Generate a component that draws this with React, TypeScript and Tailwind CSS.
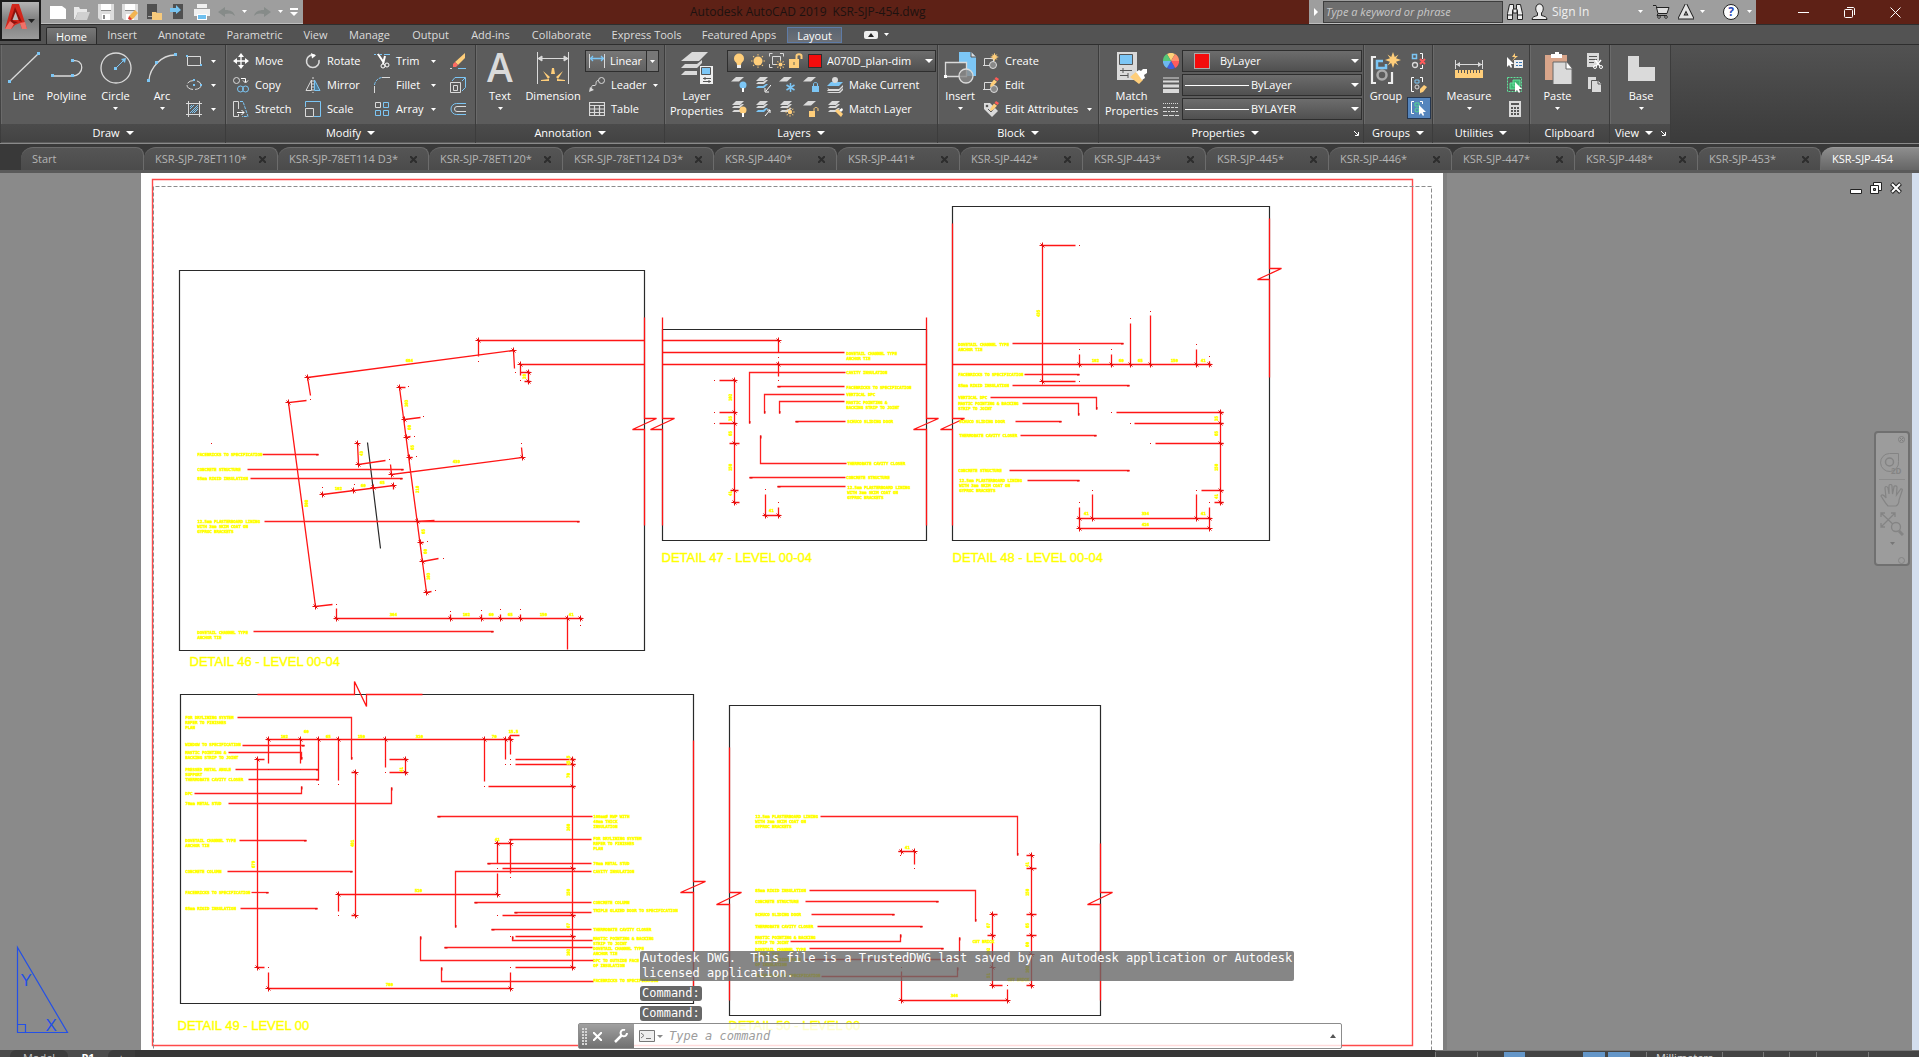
import React from 'react';

const L = '#dadada';
const B = '#7cc6f5';
const O = '#ffce7a';

/* ---------- icon helpers ---------- */

const S: React.FC<{ children: React.ReactNode }> = ({ children }) => (
  <svg className="size-4 shrink-0" viewBox="0 0 16 16" fill="none" stroke={L} strokeWidth="1">
    {children}
  </svg>
);

const XL: React.FC<{ children: React.ReactNode }> = ({ children }) => (
  <svg className="size-8 shrink-0" viewBox="0 0 32 32" fill="none" stroke={L} strokeWidth="1">
    {children}
  </svg>
);

const Down: React.FC<{ size?: 's' | 'm' }> = ({ size = 's' }) =>
  size === 's' ? (
    <svg className="h-[3px] w-[5px] shrink-0" viewBox="0 0 5 3" fill="#fff"><path d="M0 0h5L2.5 3z" /></svg>
  ) : (
    <svg className="h-1 w-2 shrink-0" viewBox="0 0 8 4" fill="#fff"><path d="M0 0h8L4 4z" /></svg>
  );

const Sheets = ({ blue = false }: { blue?: boolean }) => (
  <g stroke="none" fill={L}>
    <path d="M5 0h8l-4 4H1z" />
    <path d="M3 5l-2 2h8l4-4-2 0-3 2z" />
    <path d="M3 9l-2 2h8l4-4-2 0-3 2z" fill={blue ? B : L} />
  </g>
);

const Sheet = () => <path d="M5 0h8L8 4.500H0z" stroke="none" fill={L} />;

const Sun = ({ x, y, r = 2.5 }: { x: number; y: number; r?: number }) => (
  <g transform={`translate(${x} ${y})`} stroke={O}>
    <circle r={r} fill={O} stroke="none" />
    {[0, 45, 90, 135, 180, 225, 270, 315].map((a) => (
      <path key={a} d={`M0 ${-r - 1}V${-r - 2.4}`} transform={`rotate(${a})`} />
    ))}
  </g>
);

const Star = ({ x, y, s = 1 }: { x: number; y: number; s?: number }) => (
  <path
    transform={`translate(${x} ${y}) scale(${s})`}
    d="M0-8L1.800-3 5.500-5.500 3-1.800 8 0 3 1.800 5.500 5.500 1.800 3 0 8-1.800 3-5.500 5.500-3 1.800-8 0-3-1.800-5.500-5.500-1.800-3z"
    fill={O}
    stroke="none"
  />
);

const Pencil = () => (
  <g stroke="none">
    <path d="M13 0l3 2-1.500 2-3-2z" fill="#ff5b57" />
    <path d="M11 2.500l3 2.300L10 9 7 10l.6-3z" fill={O} />
  </g>
);

/* ---------- ribbon icons ---------- */

const IconLine = <XL><path d="M2 29L30 2" strokeWidth="1.300" /><path d="M0 28h3v3H0zM29 0h3v3h-3z" fill={B} stroke="none" /></XL>;
const IconPolyline = <XL><path d="M2 24h19M21 9c13-3 13 15 0 15" strokeWidth="1.300" /><path d="M0 22h3v3H0zM20 22h3v3h-3zM20 7h3v3h-3z" fill={B} stroke="none" /></XL>;
const IconCircle = <XL><circle cx="16" cy="16" r="15" strokeWidth="1.300" /><path d="M17 15l7-7" stroke={B} /><path d="M14 15h3v3h-3zM26 6l-1 5-4-4z" fill={B} stroke="none" /></XL>;
const IconArc = <XL><path d="M3 28C4 16 15 3 29 3" strokeWidth="1.300" /><path d="M1 27h3v3H1zM9 9h3v3H9zM28 1h3v3h-3z" fill={B} stroke="none" /></XL>;
const IconRect = <S><path d="M1.500 3.500h13v9h-13z" /><path d="M0 2h2v2H0zM14 11h2v2h-2z" fill={B} stroke="none" /></S>;
const IconEllipse = <S><ellipse cx="8" cy="8" rx="7" ry="4.500" strokeDasharray="8 2" /><path d="M7 7h2v2H7zM7 2h2v2H7zM14 7h2v2h-2z" fill={B} stroke="none" /></S>;
const IconHatch = <S><path d="M0 2.500h16M0 13.500h16M2.500 0v16M13.500 0v16" /><path d="M4 8l4-4M4 12l8-8M8 12l4-4M4 6l2-2M6 12l6-6" stroke={B} /></S>;
const IconMove = <S><path d="M8 2v12M2 8h12" strokeWidth="1.300" stroke="#fff" /><path d="M8 0l3 4H5zM8 16l3-4H5zM0 8l4-3v6zM16 8l-4-3v6z" fill="#fff" stroke="none" /></S>;
const IconCopy = <S><circle cx="3.500" cy="3.500" r="3" /><path d="M8 1.500h4.500V5M10 3.500L12.500 6 15 3.500" stroke="#fff" /><circle cx="7.500" cy="12" r="3" stroke={B} /><circle cx="12.500" cy="12" r="3" stroke={B} /></S>;
const IconStretch = <S><path d="M5.500 6V.5h-5v15h5V13M5.500 8v-2" /><path d="M4 11.500h7M8.500 9l2.500 2.500L8.500 14" stroke="#fff" /><path d="M7 .5h3l5 15H9" stroke={B} strokeDasharray="3 1" /></S>;
const IconRotate = <S><path d="M10 2.300A6.300 6.300 0 1 0 14 7" strokeWidth="1.600" /><path d="M6 0l5 2.500-4 3z" fill="#fff" stroke="none" /></S>;
const IconMirror = <S><path d="M6.500 3v10.500H1z" /><path d="M9.500 3v10.500H15z" stroke={B} fill="#4c7b97" /><path d="M8 0v16" strokeDasharray="2 1" /></S>;
const IconScale = <S><path d="M.5 6V.5h15v15H9" stroke={B} /><path d="M.5 7.500h8v8h-8z" /></S>;
const IconTrim = <S><path d="M0 1.500h9" stroke={B} strokeDasharray="2 1" /><path d="M10 1.500h6" stroke={B} /><path d="M4 1l6 9M11 3l-2 8" stroke="#fff" strokeWidth="2" /><circle cx="9" cy="13" r="2" stroke="#fff" /><circle cx="13" cy="12" r="2" stroke="#fff" /></S>;
const IconFillet = <S><path d="M.5 16V9M8 .500h8" /><path d="M.5 8C1 4 4 1 8 .5" stroke={B} strokeDasharray="3 1" /></S>;
const IconArray = <S><path d="M1.500 1.500h5v5h-5z" /><path d="M9.500 1.500h5v5h-5zM1.500 9.500h5v5h-5zM9.500 9.500h5v5h-5z" stroke={B} /></S>;
const IconErase = <S><path d="M15 0v5l-7 7-3-3z" fill={O} stroke="none" /><path d="M5 9l3 3-2 2H3v-3z" fill="#ff6b62" stroke="none" /><path d="M0 15.500h2" /><path d="M8 15.500h8" stroke={B} /></S>;
const IconExplode = <S><path d="M.5 5.500h10v10H.5z" /><path d="M3.500 8.500h4v5h-4z" /><path d="M2 4l3-3.500h10.500v10L12 14M12 4l3-3" stroke={B} /></S>;
const IconOffset = <S><path d="M16 2.500H6.500a5.500 5.500 0 0 0 0 11H16" stroke={B} /><path d="M16 5.500H7a2.500 2.500 0 0 0 0 5h9" /></S>;
const IconText = <svg className="size-8 overflow-visible" viewBox="0 0 32 32"><text x="3" y="30" fontFamily="Open Sans, sans-serif" fontSize="39" fontWeight="600" fill={L}>A</text></svg>;
const IconDimension = (
  <XL>
    <path d="M.5 0v32M31.500 0v32M1 6.500h30" /><path d="M1 6.500l4-2.500v5zM31 6.500L27 4v5z" fill={L} />
    <g fill={O} stroke="none">
      <path d="M15 16h2l1 6h-4zM6 19l7 6-2 2zM26 19l-7 6 2 2zM4 28l8-1v2H4zM28 28l-8-1v2h8z" />
    </g>
  </XL>
);
const IconLinear = <S><path d="M.5 1v14M15.500 1v14" /><path d="M1 5.500h14M4 3L1.500 5.500 4 8M12 3l2.500 2.500L12 8" stroke={B} strokeWidth="1.300" /></S>;
const IconLeader = <S><circle cx="12.500" cy="3.500" r="3" /><path d="M9.500 3.500C5 3.500 9 9 5 8.500S4 11 1.500 13" /><path d="M0 15l1-5 4 3z" fill={L} stroke="none" /></S>;
const IconTable = <S><path d="M.5 1.500h15v13H.5zM.5 4.500h15M.5 8h15M.5 11.500h15M5.500 5v10M10.500 5v10" strokeWidth="1.200" /></S>;
const IconLayerProps = (
  <XL>
    <path d="M11 0h16l-9 9H0z" fill={L} stroke="none" /><path d="M4 12l-4 4h16l5-5v-3l-5 4zM4 19l-4 4h16v-4z" fill={L} stroke="none" />
    <path d="M19 14h13v18H19z" fill="#eee" stroke="none" /><path d="M20.500 15.500h9v7h-9z" fill={B} stroke="#555" /><path d="M22 26.500h8M22 29.500h8M24 25v3M28 28v3" stroke="#555" />
  </XL>
);
const IconBulb = <S><circle cx="8" cy="5.500" r="5" fill={O} stroke="none" /><path d="M5 8h6l-1 4H6z" fill={O} stroke="none" /><path d="M6 12h4v3H6z" fill="#eee" stroke="none" /></S>;
const IconSun = <S><Sun x={8} y={8} r={4.500} /></S>;
const IconVpFreeze = <S><path d="M.5 3.500v-3h3M11 .500h3.500v3M.5 11v3.500h3" /><path d="M8 11.500H3.500v-8h8V7" /><Sun x={11.5} y={11.5} r={2} /></S>;
const IconUnlocked = <S><path d="M1 6h10v9H1z" fill={O} stroke="none" /><path d="M8.500 6V3c0-2.500 5-2.500 5 0v3" stroke={O} strokeWidth="2" /><path d="M6 9v3" stroke="#665" /></S>;
const IconLayOff = <S><Sheet /><circle cx="12" cy="8" r="3.500" fill={B} stroke="none" /><path d="M12 11v4" stroke="#fff" strokeWidth="2" /></S>;
const IconLayIso = <S><Sheets blue /><path d="M16 8l-5 6M10 15v-4M10 15h4" stroke="#fff" /></S>;
const IconLayFrz = <S><Sheet /><path d="M11.500 6v9M7.500 8l8 5M15.500 8l-8 5" stroke={B} strokeWidth="1.500" /></S>;
const IconLayLock = <S><Sheet /><path d="M9 9h7v6H9z" fill={B} stroke="none" /><path d="M10.500 9V7c0-2 4-2 4 0v2" stroke={B} /></S>;
const IconMakeCur = <S><path d="M4 5h12l-4 4H0z" fill={B} stroke="none" /><path d="M2 11l-2 1h12l4-4v2l-4 4H0zM2 15h10l4-4v2l-3 3H0z" fill={L} stroke="none" /><circle cx="8" cy="3" r="3" fill={L} stroke="none" /></S>;
const IconLayOn = <S><Sheets /><circle cx="12" cy="9" r="3.500" fill={O} stroke="none" /><path d="M12 12v4" stroke="#fff" strokeWidth="2" /></S>;
const IconLayUniso = <S><Sheets blue /><path d="M10 15l5-6M15 12V9h-3" stroke="#fff" /></S>;
const IconLayThaw = <S><Sheets /><Sun x={11} y={11} r={2.200} /></S>;
const IconLayUnlock = <S><Sheet /><path d="M6 10h6v6H6z" fill={O} stroke="none" /><path d="M11 10V8c0-2 4-2 4 0v2" stroke={O} /></S>;
const IconLayMatch = <S><Sheets /><path d="M8 10l3-2 5 5-2 3z" fill={O} stroke="none" /><path d="M12 9l3-2 1 2-2 2z" fill="#fff" stroke="none" /></S>;
const IconInsert = (
  <XL>
    <path d="M15 0h12l5 5v19H15z" fill={B} stroke="none" /><path d="M27 0v5h5" fill="#ddd" stroke="#555" />
    <path d="M1.500 10.500h21v14h-21z" fill="#666" stroke={L} strokeWidth="1.300" /><circle cx="22" cy="24" r="7" fill="#888c" strokeWidth="1.300" /><path d="M0 23h3v3H0z" fill="#fff" stroke="none" />
  </XL>
);
const IconCreate = <S><path d="M1.500 5.500h9v7h-9zM0 12.500h2" /><circle cx="10" cy="12" r="3.500" fill="#888" /><Star x={11.500} y={4} s={0.550} /></S>;
const IconEdit = <S><path d="M1.500 5.500h9v7h-9zM0 12.500h2" /><circle cx="11" cy="12" r="3.500" fill="#888" /><Pencil /></S>;
const IconEditAttr = <S><path d="M1 2h6l8 8-6 6-8-8z" fill={L} stroke="none" /><circle cx="4" cy="5" r="1.300" fill="#555" stroke="none" /><path d="M5 8l3 3 4-5" stroke="#555" /><Pencil /></S>;
const IconMatchProps = (
  <XL>
    <path d="M1 0h20v28H1z" fill={L} stroke="none" /><path d="M3.500 2.500h13v10h-13z" fill={B} stroke="#555" /><path d="M4 18.500h12M4 23.500h8M7 16v5M12 21v5" stroke="#555" />
    <path d="M14 25l6-5 7 8-4 4z" fill={O} stroke="none" /><path d="M20 20l3-2 2 1 2-2h4v4l-3 2 1 3-3 2z" fill="#fff" stroke="none" />
  </XL>
);
const IconWheel = (
  <S>
    <g stroke="none">
      {['#ffd27a', '#ff8f6b', '#ff5c5c', '#3c5fe0', '#6db8f0', '#55c878'].map((c, i) => (
        <path key={c} d="M8 8L4 1A8 8 0 0 1 12 1z" fill={c} transform={`rotate(${i * 60} 8 8)`} />
      ))}
    </g>
  </S>
);
const IconWeight = <S><path d="M0 1h16" /><path d="M0 4.500h16" strokeWidth="2" /><path d="M0 9h16" strokeWidth="3" /><path d="M0 14h16" strokeWidth="4" /></S>;
const IconLtype = <S><path d="M0 2.500h16" strokeDasharray="1 1" /><path d="M0 6.500h16" strokeDasharray="3 1" /><path d="M0 10.500h16" strokeDasharray="4 1 2 1" /><path d="M0 14.500h16" strokeDasharray="5 1" /></S>;
const IconGroup = (
  <XL>
    <path d="M6 5H2v26h4M18 31h4V20" strokeWidth="2.200" stroke="#eee" /><path d="M13 9H7v7h9v-4" stroke={B} strokeWidth="2.500" /><circle cx="12" cy="23" r="4.500" stroke="#aaa" strokeWidth="2.500" />
    <Star x={23} y={8} />
  </XL>
);
const IconUngroup = <S><path d="M1.500 1.500h4v4h-4z" stroke={B} strokeWidth="1.500" /><circle cx="4" cy="12" r="2.500" strokeWidth="1.300" /><path d="M9 .500h2.500V6M11.500 12v3.500H9" stroke="#fff" /><path d="M9 6l5 5M14 6l-5 5" stroke="#ff5c5c" strokeWidth="2" /></S>;
const IconGroupEdit = <S><path d="M3 .500H.5v14H3M9 .500h2.500V5" stroke="#fff" /><path d="M4 3h4v3H4z" stroke={B} /><circle cx="6" cy="10" r="2" /><path d="M9 12l4-4 3 2-4 5-3 1z" fill={O} stroke="none" /></S>;
const IconGroupSel = <S><path d="M3 1.500H.5v12H3M9 1.500h2.500V4" stroke="#fff" /><path d="M4 3h4v3H4z" stroke="#55d890" /><circle cx="6" cy="10" r="2" stroke="#55d890" /><path d="M8 5v10l2-2 2 3 1-1-1-3h3z" fill="#fff" stroke="none" /></S>;
const IconMeasure = <XL><path d="M2.500 8v9M29.500 8v9M3 12.500h26" /><path d="M3 12.500l4-2.500v5zM29 12.500L25 10v5z" fill={L} stroke="none" /><path d="M2 18h28v8H2z" fill={O} stroke="none" /><path d="M5.500 18v3M8.500 18v3M11.500 18v3M14.500 18v4M17.500 18v3M20.500 18v3M23.500 18v3M26.500 18v3" stroke="#555" /></XL>;
const IconQSelect = <S><path d="M0 4v10l2-2 2 3 1-1-1-3h3z" fill="#fff" stroke="none" /><path d="M8 0L5 4h3L5 8l6-5H8z" fill={O} stroke="none" /><path d="M7 7h9v8H7z" fill="#eee" stroke="none" /><path d="M9 9.500h2M12 9.500h3M9 12.500h2M12 12.500h3" stroke="#3979b8" /></S>;
const IconSelAll = <S><path d="M.5.500h14v14H.5z" stroke="#5fe39a" strokeDasharray="2 1" /><path d="M3 6h6v6H3zM6 3h7v6H6z" fill="#3fb574" stroke="#5fe39a" /><path d="M8 5v10l2-2 2 3 1-1-1-3h3z" fill="#fff" stroke="none" /></S>;
const IconCalc = <S><path d="M2 0h12v16H2z" fill={L} stroke="none" /><path d="M4 3h8" stroke="#555" strokeWidth="2" /><path d="M4 7h8M4 10h8M4 13h8" stroke="#555" strokeWidth="2" strokeDasharray="2 1" /></S>;
const IconPaste = <XL><path d="M3 3h22v25H3z" fill="#d9a58a" stroke="none" /><path d="M9 2h4V0h4v2h3v4H9z" fill="#fff" stroke="none" /><path d="M11 10h14l5 6v17H11z" fill={L} stroke="#666" /><path d="M24 10v7h6" fill="#fff" stroke="#666" /></XL>;
const IconCut = <S><path d="M0 0h12v8l-4 6H0z" fill={L} stroke="none" /><path d="M2 3.500h8M2 6.500h8M2 9.500h5" stroke="#555" /><path d="M8 7l5 6M14 7l-5 6" stroke="#fff" strokeWidth="1.500" /><circle cx="8" cy="14" r="1.500" stroke="#fff" /><circle cx="14" cy="14" r="1.500" stroke="#fff" /></S>;
const IconCopyClip = <S><path d="M1 0h8v12H1z" fill={L} stroke="none" /><path d="M4.500 3.500h7l3 3v9h-10z" fill={L} stroke="#5a5a5a" /><path d="M11 4v3h3" stroke="#5a5a5a" /></S>;
const IconBase = <XL><path d="M3 4h11v11h16v14H3z" fill={L} stroke="none" /></XL>;

/* ---------- ribbon parts ---------- */

const Big: React.FC<{ icon: React.ReactNode; label: string; width: string; arrow?: boolean }> = ({ icon, label, width, arrow }) => (
  <button className={`flex shrink-0 flex-col items-center pt-[3px] ${width}`}>
    {icon}
    <span className="mt-1 text-[11px] leading-[15px] whitespace-pre-line">{label}</span>
    {arrow && <span className="mt-1"><Down /></span>}
  </button>
);

const Row: React.FC<{ icon: React.ReactNode; label?: string; arrow?: boolean }> = ({ icon, label, arrow }) => (
  <button className="flex h-6 w-full items-center gap-[6px]">
    {icon}
    {label && <span className="flex-1 text-left text-[11px] whitespace-nowrap">{label}</span>}
    {arrow && <span className="ml-auto"><Down /></span>}
  </button>
);

const Panel: React.FC<{ title: string; width: string; arrow?: boolean; launcher?: boolean; children: React.ReactNode }> = ({
  title, width, arrow = true, launcher, children,
}) => (
  <section className={`flex shrink-0 flex-col border-r border-[#3c3c3c] bg-[#5c5c5c] ${width}`}>
    <div className="flex h-[79px] items-start border-l border-[#6a6a6a] pt-1">{children}</div>
    <div className={`relative flex h-[18px] items-center justify-center gap-[6px] bg-linear-to-b from-[#4b4b4b] to-[#434343] text-[11px] ${launcher ? 'pr-3' : ''}`}>
      <span>{title}</span>
      {arrow && <Down size="m" />}
      {launcher && (
        <svg className="absolute right-1 bottom-[6px] size-[5px]" viewBox="0 0 5 5" stroke="#fff" fill="none"><path d="M0 0l4 4M4.500 1v3.500H1" /></svg>
      )}
    </div>
  </section>
);

const Combo: React.FC<{ id: string; value: string; children?: React.ReactNode }> = ({ id, value, children }) => (
  <label htmlFor={id} className="flex h-[22px] w-full items-center border border-[#2e2e2e] bg-linear-to-b from-[#6d6d6d] to-[#505050] px-[2px]">
    {children}
    <select id={id} aria-label={id} className="min-w-0 flex-1 appearance-none overflow-hidden bg-transparent text-[11px] leading-4 outline-none">
      <option>{value}</option>
    </select>
    <span className="ml-1"><Down size="m" /></span>
  </label>
);

const Ribbon: React.FC = () => (
  <div className="flex h-[99px] shrink-0 border-t border-[#2e2e2e] bg-linear-to-b from-[#525252] to-[#3b3b3b] pl-px text-white">
    <Panel title="Draw" width="w-[225px]">
      <Big icon={IconLine} label="Line" width="w-[43px]" />
      <Big icon={IconPolyline} label="Polyline" width="w-[43px]" />
      <Big icon={IconCircle} label="Circle" width="w-[55px]" arrow />
      <Big icon={IconArc} label="Arc" width="w-[38px]" arrow />
      <div className="ml-[5px] w-[30px]">
        <Row icon={IconRect} arrow />
        <Row icon={IconEllipse} arrow />
        <Row icon={IconHatch} arrow />
      </div>
    </Panel>

    <Panel title="Modify" width="w-[250px]">
      <div className="ml-[6px] w-[72px]">
        <Row icon={IconMove} label="Move" />
        <Row icon={IconCopy} label="Copy" />
        <Row icon={IconStretch} label="Stretch" />
      </div>
      <div className="w-[69px]">
        <Row icon={IconRotate} label="Rotate" />
        <Row icon={IconMirror} label="Mirror" />
        <Row icon={IconScale} label="Scale" />
      </div>
      <div className="w-[62px]">
        <Row icon={IconTrim} label="Trim" arrow />
        <Row icon={IconFillet} label="Fillet" arrow />
        <Row icon={IconArray} label="Array" arrow />
      </div>
      <div className="ml-[14px] w-4">
        <Row icon={IconErase} />
        <Row icon={IconExplode} />
        <Row icon={IconOffset} />
      </div>
    </Panel>

    <Panel title="Annotation" width="w-[189px]">
      <Big icon={IconText} label="Text" width="w-[46px]" arrow />
      <Big icon={IconDimension} label="Dimension" width="w-[60px]" />
      <div className="ml-[2px] w-[74px]">
        <div className="flex h-6 items-center">
          <button className="flex h-[22px] flex-1 items-center gap-[5px] border border-[#2e2e2e] bg-linear-to-b from-[#777] to-[#626262] pl-[3px] text-[11px]">
            {IconLinear}
            Linear
          </button>
          <button aria-label="More dimensions" className="flex h-[22px] w-3 items-center justify-center border border-l-0 border-[#2e2e2e] bg-[#777]"><Down /></button>
        </div>
        <div className="pr-[1px] pl-1">
          <Row icon={IconLeader} label="Leader" arrow />
          <Row icon={IconTable} label="Table" />
        </div>
      </div>
    </Panel>

    <Panel title="Layers" width="w-[273px]">
      <Big icon={IconLayerProps} label={'Layer\nProperties'} width="w-[61px]" />
      <div className="w-[209px]">
        <div className="flex h-6 items-center">
          <Combo id="Layer" value="A070D_plan-dim">
            <span className="mr-1 ml-px flex items-center gap-[3px]">{IconBulb}{IconSun}{IconVpFreeze}{IconUnlocked}</span>
            <span className="mr-[5px] size-[14px] shrink-0 border border-[#2e2e2e] bg-[#f40c0c]" />
          </Combo>
        </div>
        <div className="flex gap-2 pl-1">
          <button aria-label="Layer off">{IconLayOff}</button>
          <button aria-label="Isolate">{IconLayIso}</button>
          <button aria-label="Freeze">{IconLayFrz}</button>
          <button aria-label="Lock">{IconLayLock}</button>
          <div className="w-[100px]"><Row icon={IconMakeCur} label="Make Current" /></div>
        </div>
        <div className="flex gap-2 pl-1">
          <button aria-label="Layers on">{IconLayOn}</button>
          <button aria-label="Unisolate">{IconLayUniso}</button>
          <button aria-label="Thaw">{IconLayThaw}</button>
          <button aria-label="Unlock">{IconLayUnlock}</button>
          <div className="w-[100px]"><Row icon={IconLayMatch} label="Match Layer" /></div>
        </div>
      </div>
    </Panel>

    <Panel title="Block" width="w-[161px]">
      <Big icon={IconInsert} label="Insert" width="w-[42px]" arrow />
      <div className="ml-[2px] w-[109px]">
        <Row icon={IconCreate} label="Create" />
        <Row icon={IconEdit} label="Edit" />
        <Row icon={IconEditAttr} label="Edit Attributes" arrow />
      </div>
    </Panel>

    <Panel title="Properties" width="w-[265px]" launcher>
      <Big icon={IconMatchProps} label={'Match\nProperties'} width="w-[63px]" />
      <div className="w-[19px]">
        <Row icon={IconWheel} />
        <Row icon={IconWeight} />
        <Row icon={IconLtype} />
      </div>
      <div className="flex w-[180px] flex-col gap-[2px] pt-px">
        <Combo id="Color" value="ByLayer"><span className="mr-[10px] ml-[9px] size-4 shrink-0 border border-[#aaa] bg-[#f40c0c]" /></Combo>
        <Combo id="Lineweight" value="ByLayer"><span className="mr-[2px] h-px w-16 shrink-0 bg-white" /></Combo>
        <Combo id="Linetype" value="BYLAYER"><span className="mr-[2px] h-px w-16 shrink-0 bg-white" /></Combo>
      </div>
    </Panel>

    <Panel title="Groups" width="w-[69px]">
      <Big icon={IconGroup} label="Group" width="w-[42px]" />
      <div className="flex w-6 flex-col items-center">
        <button aria-label="Ungroup" className="flex h-6 items-center">{IconUngroup}</button>
        <button aria-label="Group edit" className="flex h-6 items-center">{IconGroupEdit}</button>
        <button aria-label="Group selection" className="flex h-[22px] w-6 items-center justify-center border border-[#26374f] bg-[#5585bd]">{IconGroupSel}</button>
      </div>
    </Panel>

    <Panel title="Utilities" width="w-[97px]">
      <Big icon={IconMeasure} label="Measure" width="w-[70px]" arrow />
      <div className="ml-[3px] w-4">
        <Row icon={IconQSelect} />
        <Row icon={IconSelAll} />
        <Row icon={IconCalc} />
      </div>
    </Panel>

    <Panel title="Clipboard" width="w-[80px]" arrow={false}>
      <Big icon={IconPaste} label="Paste" width="w-[53px]" arrow />
      <div className="ml-[3px] w-4">
        <Row icon={IconCut} />
        <Row icon={IconCopyClip} />
      </div>
    </Panel>

    <Panel title="View" width="w-[61px]" launcher>
      <Big icon={IconBase} label="Base" width="w-[60px]" arrow />
    </Panel>
  </div>
);

/* ---------- title bar ---------- */

const AppMenu: React.FC = () => (
  <button aria-label="Application menu" className="absolute top-0 left-0 z-10 flex h-[41px] w-[41px] items-center border-2 border-[#1c1c1c] bg-linear-to-b from-[#b5b5b5] via-[#7d7d7d] to-[#9b9b9b]">
    <svg className="mb-2 ml-[2px] h-7 w-6" viewBox="0 0 24 28">
      <path d="M8 1h7l8 25h-5l-2-6-5 2-4 4H1z" fill="#d3261b" />
      <path d="M11 4l-7 21 6-4 4-2-5-1 3-8 3 8 3 1z" fill="#8c120c" />
      <path d="M11.500 9l-3 8h6z" fill="#b9b9b9" />
      <path d="M1 26l5-8 4 3-3 5zM18 26l-2-6 5-1 2 7z" fill="#ef7168" />
    </svg>
    <svg className="h-1 w-[7px]" viewBox="0 0 7 4"><path d="M0 0h7L3.500 4z" fill="#222" /></svg>
  </button>
);

const quick: { name: string; icon: React.ReactNode }[] = [
  { name: 'New', icon: <path d="M0 2h12l4 3v10H0z" fill="#fff" stroke="none" /> },
  { name: 'Open', icon: <g stroke="none"><path d="M0 3h5l1 2h7v3H4l-3 7H0z" fill="#e8e8e8" /><path d="M4 8h12l-3 8H1z" fill="#d0d0d0" /></g> },
  { name: 'Save', icon: <g stroke="none"><path d="M0 0h16v16H2l-2-2z" fill="#ddd" /><path d="M3 0h10v6H3zM4 10h8v6H4z" fill="#fff" /><path d="M3 6h10v1H3zM5 11h2v4H5z" fill="#888" /></g> },
  { name: 'Save As', icon: <g stroke="none"><path d="M0 0h16v16H2l-2-2z" fill="#ddd" /><path d="M3 0h10v6H3zM4 10h8v6H4z" fill="#fff" /><path d="M3 6h10v1H3z" fill="#888" /><path d="M7 12l6-6 3 3-5 6-4 1z" fill="#f2b452" /><path d="M7 12l-1 3 3 1 1-1z" fill="#d33" /></g> },
  { name: 'Open from Web', icon: <g stroke="none"><path d="M1 0h10v15H1z" fill="#505050" /><path d="M2 12h8v1H2z" fill="#aaa" /><path d="M6 8h4l1 1h5v7H6z" fill="#f7ca7c" /></g> },
  { name: 'Save to Web', icon: <g stroke="none"><path d="M3 0h10v15H3z" fill="#505050" /><path d="M0 4h6V1l5 5-5 4V8H0z" fill="#78c4f0" /></g> },
  { name: 'Plot', icon: <g stroke="none"><path d="M3 0h10v4H3zM0 5h16v7H0z" fill="#f0f0f0" /><path d="M3 10h10v6H3z" fill="#fff" /><path d="M4 11h8v4H4z" fill="#6fc0ef" /></g> },
];

const TitleBar: React.FC = () => (
  <header className="relative flex h-6 shrink-0 items-center bg-[#5e2116] text-[12px]">
    <AppMenu />
    <div className="ml-[41px] flex h-6 w-[262px] items-center gap-2 border-b border-[#bdbdbd] bg-[#9e9e9e] pl-[9px]">
      {quick.map((q) => (
        <button key={q.name} aria-label={q.name}>
          <svg className="size-4" viewBox="0 0 16 16">{q.icon}</svg>
        </button>
      ))}
      <div className="flex items-center gap-[7px]">
        <button aria-label="Undo"><svg className="h-3 w-[17px]" viewBox="0 0 17 12"><path d="M0 6l7-5v3c6 0 9 2 10 6-3-3-6-3-10-2v3z" fill="#868b89" /></svg></button>
        <Down />
        <button aria-label="Redo"><svg className="h-3 w-[17px]" viewBox="0 0 17 12"><path d="M17 6l-7-5v3C4 4 1 6 0 10c3-3 6-3 10-2v3z" fill="#868b89" /></svg></button>
        <Down />
        <button aria-label="Customize"><svg className="h-2 w-2" viewBox="0 0 8 8" fill="#fff"><path d="M0 0h8v2H0zM0 4h8L4 8z" /></svg></button>
      </div>
    </div>
    <h1 className="ml-[387px] flex flex-1 gap-[6px] whitespace-nowrap text-[#1d1210]">
      <span>Autodesk AutoCAD 2019</span>
      <span>KSR-SJP-454.dwg</span>
    </h1>
    <div className="flex h-6 w-[447px] items-center border-b border-[#bdbdbd] bg-[#9e9e9e]">
      <button aria-label="Collapse search" className="flex w-[14px] justify-center"><svg className="h-2 w-1" viewBox="0 0 4 8" fill="#fff"><path d="M0 0l4 4-4 4z" /></svg></button>
      <input aria-label="Search" placeholder="Type a keyword or phrase" className="h-[22px] w-[180px] border border-[#3d3d3d] bg-[#6e6e6e] pl-[2px] text-[11px] text-white italic outline-none placeholder:text-[#c9c9c9]" />
      <button aria-label="Find" className="ml-1">
        <svg className="h-[18px] w-4" viewBox="0 0 16 18" stroke="#222" fill="#eee"><path d="M2.500 1.500h4v6h-1v9h-5v-6zM13.500 1.500h-4v6h1v9h5v-6z" /><path d="M6 6h4v4H6zM1 12h4M11 12h4" /></svg>
      </button>
      <button className="ml-2 flex w-[112px] items-center gap-1 text-[12px] text-[#f0f0f0]">
        <svg className="h-[18px] w-[17px]" viewBox="0 0 17 18" stroke="#222" fill="#eee"><path d="M1 16.500c0-3 3-3 5.500-4V10c-3-3-2-9 2-9s5 6 2 9v2.500c3 1 5.500 1 5.500 4z" /></svg>
        Sign In
        <span className="ml-auto"><Down /></span>
      </button>
      <button aria-label="Cart" className="ml-[10px]">
        <svg className="h-[15px] w-[17px]" viewBox="0 0 17 15" stroke="#222" fill="#ddd"><path d="M0 1.500h3l2 8h9l2-6H4" /><path d="M5 9.500l-1 2h10" fill="none" /><circle cx="6" cy="13" r="1.300" /><circle cx="13" cy="13" r="1.300" /></svg>
      </button>
      <button aria-label="Autodesk App Store" className="ml-2 flex items-center gap-[6px]">
        <svg className="size-4" viewBox="0 0 16 16" stroke="#222" fill="none"><path d="M8 3L3 13h10z" strokeWidth="5" /><path d="M8 3L3 13h10z" stroke="#e4e4e4" strokeWidth="3" /></svg>
        <Down />
      </button>
      <button aria-label="Help" className="ml-[18px] flex items-center gap-2">
        <span className="flex size-4 items-center justify-center rounded-full border border-[#222] bg-white text-[12px] leading-none font-bold text-[#2c49b8]">?</span>
        <Down />
      </button>
    </div>
    <div className="flex w-[163px] items-center justify-between pr-[18px] pl-[42px]">
      <button aria-label="Minimize"><svg className="size-[11px]" viewBox="0 0 11 11" stroke="#fff"><path d="M0 5.500h11" /></svg></button>
      <button aria-label="Restore"><svg className="size-[11px]" viewBox="0 0 11 11" stroke="#fff" fill="none"><rect x=".5" y="2.500" width="8" height="8" rx="1" /><path d="M3 .500h6c1 0 1.500.5 1.500 1.500v6" /></svg></button>
      <button aria-label="Close"><svg className="size-[11px]" viewBox="0 0 11 11" stroke="#fff"><path d="M.5.500l10 10M10.500.500l-10 10" /></svg></button>
    </div>
  </header>
);

const menuTabs = [
  ['Home', 'w-[51px]'], ['Insert', 'w-[50px]'], ['Annotate', 'w-[69px]'], ['Parametric', 'w-[77px]'],
  ['View', 'w-[45px]'], ['Manage', 'w-[63px]'], ['Output', 'w-[59px]'], ['Add-ins', 'w-[61px]'],
  ['Collaborate', 'w-[81px]'], ['Express Tools', 'w-[89px]'], ['Featured Apps', 'w-[96px]'], ['Layout', 'w-[55px]'],
];

const MenuTabs: React.FC = () => (
  <nav className="flex h-5 shrink-0 border-t border-[#2e2e2e] bg-[#535353] pl-[46px] text-[11px] text-[#dcdcdc]">
    {menuTabs.map(([name, w]) => (
      <button
        key={name}
        className={`${w} text-center leading-4 whitespace-nowrap ${
          name === 'Home' ? 'mt-[2px] -mb-px rounded-t-[2px] border border-b-0 border-[#2a2a2a] bg-linear-to-b from-[#787878] to-[#5c5c5c] text-white' : ''
        } ${name === 'Layout' ? 'mt-[2px] mb-px border border-[#5f7ba6] bg-linear-to-b from-[#5a6471] to-[#6c7077] text-white' : ''}`}
      >
        {name}
      </button>
    ))}
    <button aria-label="Ribbon state" className="ml-[22px] flex items-center gap-[6px]">
      <svg className="h-2 w-[14px]" viewBox="0 0 14 8"><rect width="14" height="8" rx="2" fill="#eee" /><path d="M4 6l3-4 3 4z" fill="#222" /></svg>
      <Down />
    </button>
  </nav>
);

const fileTabs = [
  ['KSR-SJP-78ET110*', 'w-[134px]'], ['KSR-SJP-78ET114 D3*', 'w-[151px]'], ['KSR-SJP-78ET120*', 'w-[134px]'],
  ['KSR-SJP-78ET124 D3*', 'w-[151px]'], ['KSR-SJP-440*', 'w-[123px]'], ['KSR-SJP-441*', 'w-[123px]'],
  ['KSR-SJP-442*', 'w-[123px]'], ['KSR-SJP-443*', 'w-[123px]'], ['KSR-SJP-445*', 'w-[123px]'],
  ['KSR-SJP-446*', 'w-[123px]'], ['KSR-SJP-447*', 'w-[123px]'], ['KSR-SJP-448*', 'w-[123px]'],
  ['KSR-SJP-453*', 'w-[123px]'],
];

const tabShape = 'h-[23px] shrink-0 items-center rounded-tl-[12px] rounded-tr-[8px] border-t border-r border-[#6c6c6c] bg-linear-to-b from-[#555] to-[#4b4b4b] pl-[11px]';

const FileTabs: React.FC = () => (
  <div className="h-[30px] shrink-0 overflow-hidden border-t border-[#8a8a8a] bg-[#5a5a5a] text-[11px] text-[#b4b4b4]">
    <div className="flex h-[26px] items-end bg-[#393939] pl-[21px]">
      <button className={`${tabShape} flex w-[123px]`}>Start</button>
      {fileTabs.map(([name, w]) => (
        <div key={name} className={`${tabShape} ${w} flex justify-between pr-[11px]`}>
          <button className="whitespace-nowrap">{name}</button>
          <button aria-label={`Close ${name}`}>
            <svg className="size-[7px]" viewBox="0 0 7 7" stroke="#2d2d2d" strokeWidth="2"><path d="M0 0l7 7M7 0L0 7" /></svg>
          </button>
        </div>
      ))}
      <button className="flex h-[23px] flex-1 items-center rounded-tl-[12px] border-t border-[#999] bg-linear-to-b from-[#8d8d8d] to-[#666] pl-[11px] whitespace-nowrap text-white">KSR-SJP-454</button>
    </div>
  </div>
);

/* ---------- drawing data (sheet coordinates) ---------- */

type Label = [number, number, string];
type Dim = [number, number, string, number?];

interface Detail {
  title: Label;
  frame: string;
  lines: string;
  leaders: string[];
  ticks: [number, number][];
  dots: [number, number][];
  dims: Dim[];
  labels: Label[];
}

const BOARD = '12.5mm PLASTERBOARD LINING|WITH 3mm SKIM COAT ON|GYPROC BRACKETS';
const DOVE = 'DOVETAIL CHANNEL TYPE|ANCHOR TIE';
const FACE = 'FACEBRICKS TO SPECIFICATION';
const RIGID = '85mm RIGID INSULATION';
const THERMO = 'THERMOBATE CAVITY CLOSER';
const MASTIC = 'MASTIC POINTING &|BACKING STRIP TO JOINT';
const MASTIC2 = 'MASTIC POINTING & BACKING|STRIP TO JOINT';
const DRY = 'FOR DRYLINING SYSTEM|REFER TO FINISHES|PLAN';
const DOOR = 'SCHUCO SLIDING DOOR';
const DPCOUT = 'DPC TO OUTSIDE FACE|OF INSULATION';

const details: Detail[] = [
  {
    title: [189, 665, 'DETAIL 46 - LEVEL 00-04'],
    frame: 'M179 270H644V650H179z M367 442L380 548',
    lines:
      'M644 317V418H656L632 429H644V525 M644 340H478V356 M307 377L513 350L514 368 M307 377L310 395 M306 400L288 402L315 606L332 604 M644 364H520V375 M520 372H530 M528 370V383 M524 381H530 M399 387L426 592 M399 387H405 M404 419L420 417 M406 437L410 436 M409 457H412 M417 521L434 520 M420 542H423 M422 561L438 558 M426 592L431 591 M357 443L358 464L385 460 M390 464L391 474L522 457L521 447 M322 494L393 485V489 M334 618H582 M336 608V618 M450 614V618 M481 614V618 M500 614V618 M520 614V618 M567 618V649',
    leaders: ['M262 454H318', 'M247 469H403', 'M250 478H402', 'M264 521H579', 'M253 631H493'],
    ticks: [[478, 340], [307, 377], [513, 350], [288, 402], [315, 606], [520, 364], [528, 372], [528, 381], [399, 387], [404, 419], [406, 437], [409, 457], [417, 521], [420, 542], [422, 561], [426, 592], [357, 443], [358, 464], [391, 474], [522, 457], [322, 494], [353, 490], [373, 487], [393, 485], [336, 618], [450, 618], [481, 618], [500, 618], [520, 618], [567, 618], [580, 618]],
    dots: [[478, 361], [515, 372], [310, 399], [336, 604], [520, 380], [408, 386], [423, 416], [414, 436], [416, 456], [427, 541], [443, 558], [435, 590], [389, 459], [521, 443], [322, 487], [354, 484], [211, 443], [450, 611], [481, 610], [500, 609], [520, 609], [580, 625]],
    dims: [[409, 360, '684'], [306, 503, '508', 1], [524, 376, '28', 1], [406, 403, '103', 1], [409, 427, '60', 1], [412, 447, '65', 1], [417, 489, '210', 1], [423, 531, '65', 1], [425, 551, '60', 1], [428, 576, '103', 1], [361, 453, '43', 1], [456, 461, '439'], [338, 488, '102'], [363, 485, '60'], [382, 482, '65'], [393, 614, '364'], [466, 614, '102'], [491, 614, '60'], [510, 614, '65'], [543, 614, '150'], [571, 614, '41']],
    labels: [[197, 454, FACE], [197, 469, 'CONCRETE STRUCTURE'], [197, 478, RIGID], [197, 521, BOARD], [197, 632, DOVE]],
  },
  {
    title: [661, 561, 'DETAIL 47 - LEVEL 00-04'],
    frame: 'M662 329H926V540H662z',
    lines:
      'M662 317V418H674L650 429H662V525 M926 317V418H938L913 429H926V525 M662 340H778V352 M662 352H844 M662 364H926 M778 362V376 M734 379V503 M719 380H736 M719 412H736 M719 423H736 M729 443H739 M730 490H738 M733 502H739 M765 494V516 M778 507V516 M763 515H780',
    leaders: ['M845 372H749V423', 'M844 386H777', 'M844 394H764V413', 'M844 401H779V413', 'M845 421H795', 'M846 463H760V435', 'M845 477H749', 'M845 486H777'],
    ticks: [[778, 340], [778, 364], [734, 380], [734, 412], [734, 423], [734, 443], [734, 490], [734, 502], [765, 515], [778, 515]],
    dots: [[778, 357], [778, 380], [714, 380], [714, 412], [714, 423], [765, 489], [778, 502]],
    dims: [[730, 397, '102', 1], [730, 418, '35', 1], [730, 433, '65', 1], [730, 467, '150', 1], [730, 493, '41', 1], [771, 510, '41']],
    labels: [[846, 353, DOVE], [846, 372, 'CAVITY INSULATION'], [846, 387, FACE], [846, 394, 'VERTICAL DPC'], [846, 402, MASTIC], [847, 421, DOOR], [847, 463, THERMO], [846, 477, 'CONCRETE STRUCTURE'], [847, 487, BOARD]],
  },
  {
    title: [952, 561, 'DETAIL 48 - LEVEL 00-04'],
    frame: 'M952 206H1269V540H952z',
    lines:
      'M952 223V418H964L940 429H952V525 M1269 218V268H1281L1257 279H1269V377 M1075 245H1042V381H1075 M952 364H1211 M1079 354V366 M1111 354V366 M1130 323V366 M1150 315V366 M1196 349V366 M1209 361V366 M1220 410V504 M1116 412H1223 M1134 423H1223 M1155 443H1223 M1201 490H1223 M1214 502H1223 M1077 518H1211 M1092 494V518 M1196 494V518 M1079 507V528H1209V507',
    leaders: ['M1012 343H1123', 'M1024 374H1079', 'M1012 385H1129', 'M990 397H1096V409', 'M1022 403H1078V415', 'M1015 421H1061', 'M1020 435H1096', 'M1009 470H1129', 'M1027 480H1079'],
    ticks: [[1042, 245], [1042, 381], [1079, 364], [1111, 364], [1130, 364], [1150, 364], [1196, 364], [1209, 364], [1220, 412], [1220, 423], [1220, 443], [1220, 490], [1220, 502], [1079, 518], [1092, 518], [1196, 518], [1209, 518], [1079, 528], [1209, 528]],
    dots: [[1079, 245], [1079, 381], [1079, 349], [1111, 349], [1130, 318], [1150, 311], [1196, 344], [1209, 356], [1111, 412], [1130, 423], [1150, 443], [1196, 490], [1209, 502], [1079, 502], [1092, 490]],
    dims: [[1038, 313, '435', 1], [1095, 360, '102'], [1121, 360, '60'], [1140, 360, '65'], [1174, 360, '150'], [1203, 360, '41'], [1216, 418, '35', 1], [1216, 433, '65', 1], [1216, 467, '150', 1], [1216, 496, '41', 1], [1086, 513, '41'], [1145, 513, '334'], [1203, 513, '41'], [1145, 524, '416']],
    labels: [[958, 344, DOVE], [958, 374, FACE], [958, 385, RIGID], [958, 397, 'VERTICAL DPC'], [958, 403, MASTIC2], [959, 421, DOOR], [959, 435, THERMO], [958, 470, 'CONCRETE STRUCTURE'], [959, 480, BOARD]],
  },
  {
    title: [177, 1029, 'DETAIL 49 - LEVEL 00'],
    frame: 'M180 694H693V1003H180z',
    lines:
      'M257 694H354V681L366 706V694H422 M693 740V881H705L680 892H693V995 M266 739H512 M268 739V763 M300 739V763 M318 739V780 M338 739V780 M385 739V767 M484 739V781 M505 739V759 M510 739V754 M508 738L510 735H519 M264 759H257V967H264 M351 772H355V915H351 M389 759H407 M389 772H407 M405 758V774 M338 911V894H497V873 M268 972V988H510V972 M572 757V968 M515 759H575 M515 764H575 M488 786H575 M502 868H575 M502 915H575 M515 936H575 M515 967H575 M497 863V843H510V873',
    leaders: ['M237 717H351V759', 'M242 745H304', 'M228 752H301V759', 'M235 769H318', 'M248 779H318', 'M194 793H301V786', 'M228 803H391V787', 'M239 840H306', 'M227 871H352', 'M251 892H268', 'M240 908H317', 'M592 816H437', 'M591 839H509', 'M591 863H487', 'M591 871H455V927', 'M591 902H474', 'M591 912H514', 'M591 929H491', 'M592 940H512V936', 'M592 947H444', 'M593 960H420V936', 'M593 981H441V967'],
    ticks: [[268, 739], [300, 739], [318, 739], [338, 739], [385, 739], [484, 739], [505, 739], [510, 739], [257, 759], [257, 967], [355, 772], [355, 915], [405, 759], [405, 772], [338, 894], [497, 894], [268, 988], [510, 988], [572, 759], [572, 764], [572, 786], [572, 868], [572, 915], [572, 936], [572, 967], [497, 843], [510, 843]],
    dots: [[268, 769], [300, 769], [318, 784], [338, 784], [385, 772], [484, 786], [505, 764], [510, 764], [510, 759], [268, 759], [385, 759], [268, 967], [338, 915], [510, 967], [497, 868], [510, 877], [497, 915], [510, 936]],
    dims: [[284, 736, '102'], [306, 731, '60'], [328, 736, '65'], [361, 736, '150'], [419, 736, '310'], [494, 736, '70'], [513, 731, '15.5'], [253, 864, '679', 1], [352, 843, '481', 1], [401, 769, '41', 1], [418, 890, '510'], [389, 984, '780'], [568, 760, '15.5', 1], [568, 775, '70', 1], [568, 827, '260', 1], [568, 892, '150', 1], [568, 925, '67', 1], [568, 952, '102', 1], [497, 839, '41']],
    labels: [[185, 717, DRY], [185, 744, 'WINDOW TO SPECIFICATION'], [185, 752, MASTIC], [185, 769, 'PRESSED METAL ANGLE|SUPPORT'], [185, 779, THERMO], [185, 793, 'DPC'], [185, 803, '70mm METAL STUD'], [185, 840, DOVE], [185, 871, 'CONCRETE COLUMN'], [185, 892, FACE], [185, 908, RIGID], [593, 816, '100mmØ RWP WITH|40mm THICK|INSULATION'], [593, 838, DRY], [593, 863, '70mm METAL STUD'], [593, 871, 'CAVITY INSULATION'], [593, 902, 'CONCRETE COLUMN'], [593, 910, 'TRIPLE GLAZED DOOR TO SPECIFICATION'], [593, 929, THERMO], [593, 938, MASTIC2], [593, 948, DOVE], [593, 960, DPCOUT], [593, 980, FACE]],
  },
  {
    title: [728, 1029, 'DETAIL 50 - LEVEL 00'],
    frame: 'M729 705H1100V1015H729z',
    lines:
      'M729 747V892H741L716 904H729V1000 M1100 843V892H1112L1087 904H1100V1000 M898 851H914V864 M1031 854V987 M1026 855H1032 M1026 868H1036 M1026 914H1036 M1026 935H1036 M1026 985H1032 M992 913V987 M992 914H997 M987 935H995 M992 985H1002 M901 971V1000H1007V989',
    leaders: ['M820 816H1017V855', 'M809 890H975V921', 'M805 901H938', 'M811 914H894', 'M817 926H922', 'M790 941H900V934', 'M809 948H943', 'M805 959H959V937', 'M821 976H957V967'],
    ticks: [[901, 851], [914, 851], [1031, 855], [1031, 868], [1031, 914], [1031, 935], [1031, 954], [1031, 985], [992, 914], [992, 935], [992, 967], [992, 985], [901, 1000], [1007, 1000]],
    dots: [[900, 855], [914, 868], [1007, 985], [901, 967]],
    dims: [[907, 847, '41'], [1027, 864, '41', 1], [1027, 892, '150', 1], [1027, 925, '65', 1], [1027, 944, '60', 1], [1027, 969, '102', 1], [988, 925, '67', 1], [988, 951, '102', 1], [988, 975, '51', 1], [954, 995, '346'], [983, 941, 'CUT BRICK'], [1018, 979, 'CUT BRICK']],
    labels: [[755, 816, BOARD], [755, 890, RIGID], [755, 901, 'CONCRETE STRUCTURE'], [755, 914, DOOR], [755, 926, THERMO], [755, 937, MASTIC2], [755, 949, DOVE], [755, 959, DPCOUT], [755, 975, FACE]],
  },
];

const Drawing: React.FC = () => (
  <svg className="absolute inset-0 h-full w-full" viewBox="0 173 1912 877" preserveAspectRatio="xMinYMin slice" fill="none">
    <defs>
      <marker id="tip" markerWidth="4" markerHeight="2" refX="3" refY="1" orient="auto" markerUnits="userSpaceOnUse">
        <path d="M0 0h3v2H0z" fill="#e81010" />
      </marker>
    </defs>
    <rect x="1443" y="173" width="4" height="877" fill="#7f7f7f" />
    <rect x="141" y="173" width="1302" height="877" fill="#fff" />
    <g transform="translate(.5 .5)">
      <path d="M152 179H1412V1045H152z" stroke="#ff4a4a" strokeWidth="1.400" />
      <path d="M153 1060V186H1431V1060" stroke="#8c8c8c" strokeDasharray="4 2" />
      {details.map((d) => (
        <g key={d.title[2]}>
          <path d={d.frame} stroke="#2a2a2a" strokeWidth="1.200" />
          <path d={d.lines} stroke="#ff1515" strokeWidth="1.300" />
          {d.leaders.map((l) => <path key={l} d={l} stroke="#ff2020" strokeWidth="1.300" markerEnd="url(#tip)" />)}
          <path d={d.ticks.map(([x, y]) => `M${x - 3} ${y}h6M${x} ${y - 3}v6M${x - 2} ${y - 2}l4 4`).join('')} stroke="#e81010" />
          <path d={d.dots.map(([x, y]) => `M${x - 0.5} ${y}h1`).join('')} stroke="#e81010" />
          <g fill="#ff0" stroke="#ff0" strokeWidth=".6" fontFamily="DejaVu Sans Mono, monospace" fontSize="4">
            {d.dims.map(([x, y, t, r]) => (
              <text key={`${x} ${y}`} textAnchor="middle" transform={`translate(${x} ${y})${r ? ' rotate(-90)' : ''}`} y="1.500">{t}</text>
            ))}
            {d.labels.map(([x, y, t]) => (
              <text key={`${x} ${y}`} y={y + 1}>
                {t.split('|').map((line, i) => <tspan key={line} x={x} dy={i ? 5 : 0}>{line}</tspan>)}
              </text>
            ))}
          </g>
          <text x={d.title[0]} y={d.title[1]} fill="#ff0" stroke="#ff0" strokeWidth=".4" fontFamily="Liberation Sans, Arial, sans-serif" fontSize="13">{d.title[2]}</text>
        </g>
      ))}
      {/* UCS icon */}
      <g stroke="#2450e6" strokeWidth="1.200">
        <path d="M17 947V1032H67z M17 1024H25V1032" />
        <g fill="#2450e6" stroke="none" fontFamily="Liberation Sans, Arial, sans-serif" fontSize="17">
          <text x="20" y="985">Y</text>
          <text x="45" y="1030">X</text>
        </g>
      </g>
    </g>
  </svg>
);

/* ---------- overlays on the canvas ---------- */

const CommandLine: React.FC = () => (
  <div className="absolute bottom-px left-[578px] w-[764px] font-['DejaVu_Sans_Mono',monospace] text-[12px]">
    <div className="ml-[62px] flex flex-col items-start gap-[5px] leading-[15px] text-white">
      <p className="rounded-[2px] bg-[#686868]/80 px-[2px] whitespace-pre">
        {'Autodesk DWG.  This file is a TrustedDWG last saved by an Autodesk application or Autodesk\nlicensed application.'}
      </p>
      <p className="rounded-[3px] bg-[#686868] px-[2px]">Command:</p>
      <p className="rounded-[3px] bg-[#686868] px-[2px]">Command:</p>
    </div>
    <div className="mt-[2px] flex h-[26px] items-center rounded-[2px] border border-[#8c8c8c] bg-white/80">
      <div className="flex h-full w-[55px] items-center bg-linear-to-b from-[#a0a0a0] to-[#717171]">
        <svg className="ml-[3px] h-[17px] w-[5px]" viewBox="0 0 5 17"><path d="M1 0v17M4 0v17" stroke="#d5d5d5" strokeWidth="2" strokeDasharray="2 1" /></svg>
        <button aria-label="Close command line" className="ml-[6px]"><svg className="size-[9px]" viewBox="0 0 9 9" stroke="#fff" strokeWidth="2"><path d="M0 0l9 9M9 0L0 9" /></svg></button>
        <button aria-label="Customize command line" className="ml-3"><svg className="size-[14px]" viewBox="0 0 14 14" stroke="#fff" fill="none"><path d="M1 13l7-7" strokeWidth="2.500" /><path d="M11 1a3.200 3.200 0 1 0 2 3" strokeWidth="2" /></svg></button>
      </div>
      <svg className="ml-[5px] h-3 w-4" viewBox="0 0 16 12" stroke="#777" fill="#eee"><path d="M.5.500h15v11H.5z" /><path d="M2 3l3 2.500L2 8M7 8.500h5" fill="none" /></svg>
      <svg className="ml-[2px] h-[3px] w-[6px]" viewBox="0 0 6 3"><path d="M0 0h6L3 3z" fill="#888" /></svg>
      <input aria-label="Command" placeholder="Type a command" className="ml-[6px] min-w-0 flex-1 bg-transparent italic outline-none placeholder:text-[#9c9c9c]" />
      <svg className="mr-[5px] h-1 w-[6px]" viewBox="0 0 6 4"><path d="M0 4h6L3 0z" fill="#555" /></svg>
    </div>
  </div>
);

const NavBar: React.FC = () => (
  <div className="absolute top-[258px] right-[2px] flex h-[135px] w-9 flex-col items-center rounded-[4px] border-2 border-[#707070] bg-[#9c9c9c]">
    <svg className="mt-[3px] mr-[3px] size-[7px] self-end" viewBox="0 0 7 7" fill="none" stroke="#808080"><circle cx="3.500" cy="3.500" r="3" /><path d="M2 2l3 3M5 2L2 5" /></svg>
    <button aria-label="Steering wheel" className="mt-[9px]">
      <svg className="size-6" viewBox="0 0 24 24" fill="none" stroke="#848484"><path d="M9.500 1.500h9v8a9 9 0 1 1-9-8z" /><circle cx="9.500" cy="10" r="4" strokeWidth="1.500" /><text x="11" y="22" fontSize="8" fontWeight="bold" fill="#848484" stroke="none">2D</text></svg>
    </button>
    <span className="mt-[3px] h-px w-[26px] bg-[#8c8c8c]" />
    <button aria-label="Pan" className="mt-1">
      <svg className="size-6" viewBox="0 0 24 24" fill="none" stroke="#848484" strokeWidth="1.200"><path d="M8 22c-3-3-5-7-7-10 1-2 3-1 5 2L5 4c0-2 2-2 3 0l1 6V2c0-2 3-2 3 0l.5 8L14 3c0-2 3-1 3 0l-.5 8L20 6c1-2 3-1 2 1l-3 9c0 3-1 5-3 6z" /></svg>
    </button>
    <button aria-label="Zoom extents" className="mt-1">
      <svg className="size-6" viewBox="0 0 24 24" fill="none" stroke="#848484" strokeWidth="1.300"><path d="M1 1l15 14M15 1L1 15M1 5V1h4M11 1h4v4M1 11v4h4" /><circle cx="16" cy="15" r="4.500" fill="#9c9c9c" /><path d="M19 19l4 4" strokeWidth="3" /></svg>
    </button>
    <svg className="mt-[6px] h-[3px] w-[5px]" viewBox="0 0 5 3" fill="#777"><path d="M0 0h5L2.500 3z" /></svg>
    <svg className="mt-3 mr-[3px] size-[7px] self-end" viewBox="0 0 7 7" fill="none" stroke="#848484"><circle cx="3.500" cy="3.500" r="3" /></svg>
  </div>
);

const Canvas: React.FC = () => (
  <main className="flex min-h-0 flex-1 bg-[#8a8a8a]">
    <div className="relative min-w-0 flex-1 overflow-hidden">
      <Drawing />
      <div className="absolute top-[9px] right-[10px] flex gap-2">
        {/* sheet window buttons */}
        <button aria-label="Minimize drawing"><svg className="size-3" viewBox="0 0 12 12"><path d="M.5 7.500h11v4H.500z" fill="#fff" stroke="#222" /></svg></button>
        <button aria-label="Restore drawing"><svg className="size-3" viewBox="0 0 12 12" fill="#fff" stroke="#222"><path d="M3.500.500h8v8h-8z" /><path d="M.5 3.500h8v8h-8z" /><path d="M3.500 6.500h2v2h-2z" fill="#888" /></svg></button>
        <button aria-label="Close drawing"><svg className="size-3" viewBox="0 0 12 12"><path d="M1.500 1.500l9 9M10.500 1.500l-9 9" stroke="#222" strokeWidth="4" /><path d="M2 2l8 8M10 2l-8 8" stroke="#fff" strokeWidth="2" /></svg></button>
      </div>
      <NavBar />
      <CommandLine />
    </div>
    <div className="w-[7px] shrink-0 bg-[#d3deee]" />
  </main>
);

const statusCells = [
  ['w-[43px]', false], ['w-[26px]', false], ['w-[21px]', true], ['w-[58px]', false], ['w-[22px]', true], ['w-[3px]', false],
  ['w-[22px]', true], ['w-[16px]', false],
] as [string, boolean][];

const StatusBar: React.FC = () => (
  <footer className="flex h-[7px] shrink-0 items-start overflow-hidden bg-[#363636] text-[11px]">
    <div className="flex h-6 w-[135px] shrink-0 bg-[#4c4c4c] leading-[14px]">
      <button className="ml-[10px] w-[58px] rounded-t-[6px] bg-[#3c3c3c] pb-2 text-center text-[#c4c4c4]">Model</button>
      <button className="w-10 pb-2 text-center font-bold text-white">P1</button>
      <button className="w-[27px] rounded-tl-[6px] bg-[#3c3c3c] pb-2 pl-[10px] text-left text-[#c4c4c4]">+</button>
    </div>
    <div className="ml-auto flex h-6 shrink-0 border-t border-[#777] bg-[#444] pt-px leading-3 text-[#d5d5d5]">
      {statusCells.map(([w, on], i) => (
        <span key={i} className={`${w} ${on ? 'bg-[#6496c8]' : ''} ${i === 0 ? 'border-x border-[#777]' : ''}`} />
      ))}
      <button className="w-[77px] border-x border-[#777] pb-3 text-center">Millimeters</button>
      <span className="w-[41px] border-r border-[#777]" />
      <span className="w-[26px] border-r border-[#777]" />
      <span className="w-[27px] border-r border-[#777]" />
      <span className="w-[52px] border-r border-[#777]" />
      <span className="w-[50px]" />
    </div>
  </footer>
);

export default function App() {
  return (
    <div className="flex h-screen flex-col overflow-hidden font-['Open_Sans',sans-serif]">
      <TitleBar />
      <MenuTabs />
      <Ribbon />
      <FileTabs />
      <Canvas />
      <StatusBar />
    </div>
  );
}
